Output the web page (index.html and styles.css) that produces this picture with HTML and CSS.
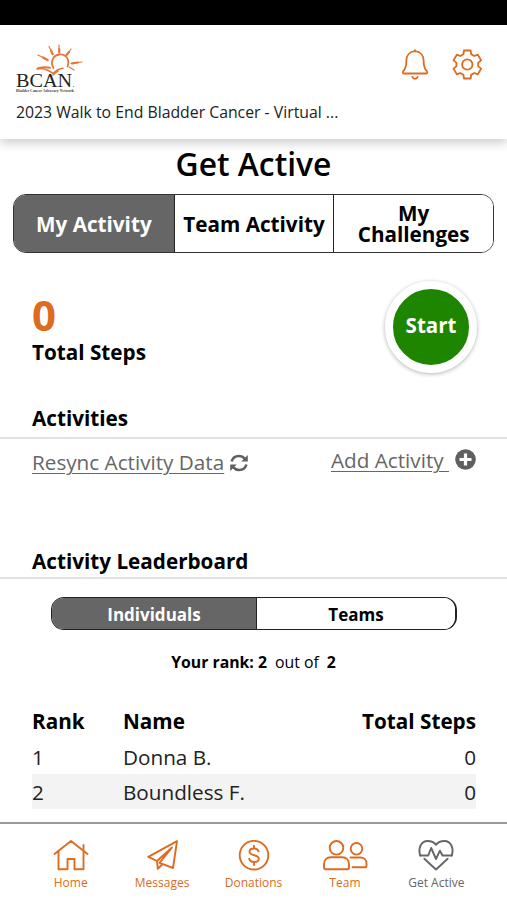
FILE: index.html
```html
<!DOCTYPE html>
<html lang="en">
<head>
    <meta charset="utf-8">
    <meta name="viewport" content="width=device-width, initial-scale=1">
    <title>Get Active</title>
    <link rel="stylesheet" href="styles.css">
</head>
<body>
    <div class="status-bar"></div>

    <header class="header">
        <div class="header-top">
            <svg class="logo" viewBox="0 0 70 52" width="70" height="52">
                <g fill="none" stroke="#e2783c" stroke-linecap="round">
                    <path stroke-width="1.8" d="M37.500 23c-3.500-6-.5-13 6-13.500c7-.5 10.500 5.500 8 12"/>
                    <path stroke-width="1.600" d="M21 24c6-2 10 1 13 2.500l3 2c4-4 7-5 10-5.200M37 30c2-2 3-3 5-4"/>
                    <path stroke-width="2" d="M22 23.300c4-1 8-1.500 12-.500"/>
                    <path stroke-width="1.200" d="M22 10l10 5M33 1.500l4 8M43 0l.3 8M55 4l-5 7M66 17l-11 1.500M58 25l-5-3"/>
                    <path stroke-width="2.200" d="M27 12.500l4.500 2.500M35 5.500l1.500 3.500M43.200 4v3.500M53 7l-2.500 3M62 17.500l-6 .8"/>
                </g>
                <text class="logo-name" x="0" y="41.500" textLength="56" lengthAdjust="spacingAndGlyphs">BCAN</text>
                <text class="logo-dot" x="56.500" y="41.500">.</text>
                <text class="logo-sub" x="0" y="46.500" textLength="58" lengthAdjust="spacingAndGlyphs">Bladder Cancer Advocacy Network</text>
            </svg>
            <div class="header-icons">
                <svg width="28" height="32" viewBox="0 0 28 32">
                    <g fill="none" stroke="#dd6b20" stroke-width="1.800" stroke-linecap="round" stroke-linejoin="round">
                        <path d="M14 2.200c-5.300.4-8.600 4-8.600 9.300c0 5.500-.6 8-3.100 10.500c-1 1.100-.9 2.500.6 2.500h22.200c1.500 0 1.600-1.400.6-2.500c-2.500-2.500-3.100-5-3.100-10.500c0-5.300-3.300-8.900-8.600-9.300z"/>
                        <path d="M14 2.200V1.200M11.300 27.800c.4 1.300 1.400 2 2.700 2s2.300-.7 2.700-2"/>
                    </g>
                </svg>
                <svg width="32" height="32" viewBox="0 0 32 32">
                    <g fill="none" stroke="#dd6b20" stroke-width="1.900" stroke-linejoin="round" transform="translate(16.300 15.500) scale(.96)">
                        <path d="M-4-10.800L-3.500-14.600H3.500L4-10.800L7.350-8.860L10.890-10.330L14.390-4.270L11.350-1.940V1.940L14.390 4.270L10.890 10.330L7.350 8.860L4 10.800L3.500 14.600H-3.500L-4 10.800L-7.350 8.860L-10.890 10.330L-14.390 4.270L-11.350 1.940V-1.940L-14.390-4.270L-10.890-10.330L-7.350-8.860z"/>
                        <circle r="5.400"/>
                    </g>
                </svg>
            </div>
        </div>
        <p class="event-name">2023 Walk to End Bladder Cancer - Virtual ...</p>
    </header>

    <main>
        <h1>Get Active</h1>

        <div class="tabs">
            <button class="tab active">My Activity</button>
            <button class="tab">Team Activity</button>
            <button class="tab">My Challenges</button>
        </div>

        <section class="summary">
            <div>
                <div class="steps">0</div>
                <div class="steps-label">Total Steps</div>
            </div>
            <button class="start">Start</button>
        </section>

        <h2>Activities</h2>
        <div class="links">
            <div class="link-item resync">
                <a href="#">Resync Activity Data</a>
                <svg width="18" height="18" viewBox="0 0 18 18">
                    <g fill="none" stroke="#5f5f5f" stroke-width="2.600">
                        <path d="M1.600 7.500C2.600 4 5.500 2 8.900 2c2.400 0 4.300.9 5.800 2.600M16.400 10.500C15.400 14 12.500 16 9.100 16c-2.400 0-4.300-.9-5.800-2.600"/>
                    </g>
                    <path fill="#5f5f5f" d="M17.800 1v6.500h-6.500zM.2 17v-6.500h6.500z"/>
                </svg>
            </div>
            <div class="link-item add">
                <a href="#">Add Activity&nbsp;</a>
                <svg width="21" height="21" viewBox="0 0 21 21">
                    <circle cx="10.500" cy="10.500" r="10.300" fill="#5f5f5f"/>
                    <path d="M10.500 4.500v12M4.500 10.500h12" stroke="#fff" stroke-width="3.200"/>
                </svg>
            </div>
        </div>

        <h2 class="leaderboard-title">Activity Leaderboard</h2>
        <div class="toggle">
            <button class="toggle-item active">Individuals</button>
            <button class="toggle-item">Teams</button>
        </div>
        <p class="rank"><b>Your rank: 2</b><span>out of</span><b>2</b></p>

        <table>
            <thead>
                <tr><th class="col-rank">Rank</th><th>Name</th><th class="num">Total Steps</th></tr>
            </thead>
            <tbody>
                <tr><td>1</td><td>Donna B.</td><td class="num">0</td></tr>
                <tr class="odd"><td>2</td><td>Boundless F.</td><td class="num">0</td></tr>
            </tbody>
        </table>
    </main>

    <nav class="bottom-nav">
        <a class="nav-item" href="#">
            <svg width="46" height="32" viewBox="0 0 46 32">
                <path d="M6.500 14L23 1l16.500 13M10.500 11.500v17.800h9V19h7v10.300h9V11.500M35.500 10V5"/>
            </svg>
            <span>Home</span>
        </a>
        <a class="nav-item" href="#">
            <svg width="46" height="32" viewBox="0 0 46 32">
                <path d="M38 1.200L9.300 16.800l8.700 4.200L33 7.500L20.500 22.800L34 28zM18 21l.8 7.800l4.700-4.500"/>
            </svg>
            <span>Messages</span>
        </a>
        <a class="nav-item" href="#">
            <svg width="46" height="32" viewBox="0 0 46 32">
                <circle cx="23" cy="15.200" r="14.300"/>
                <path d="M27.500 11.400c-.5-1.800-2.200-2.900-4.500-2.900c-2.700 0-4.500 1.200-4.500 3.300c0 4.600 9.300 2.200 9.300 6.900c0 2.100-1.900 3.300-4.800 3.300c-2.500 0-4.300-1.100-4.800-3.200M23 5.700v2.800M23 22v3"/>
            </svg>
            <span>Donations</span>
        </a>
        <a class="nav-item" href="#">
            <svg width="46" height="32" viewBox="0 0 46 32">
                <circle cx="14.500" cy="7.800" r="6.800"/>
                <path d="M2 27.500v-3c0-4.600 2.800-7.300 6.800-7.300h11.400c4 0 6.800 2.700 6.800 7.300v3c0 1-.6 1.700-1.700 1.700H3.700c-1.100 0-1.700-.7-1.700-1.700z"/>
                <circle cx="34.500" cy="8.800" r="5.800"/>
                <path d="M28.500 17.500h10c3.500 0 6 2.300 6 6v2.200c0 1-.6 1.600-1.600 1.600H30.500"/>
            </svg>
            <span>Team</span>
        </a>
        <a class="nav-item current" href="#">
            <svg width="46" height="32" viewBox="0 0 46 32">
                <path d="M7.200 15.500C4.800 7.500 8.500 1 14.500 1c3.700 0 6.500 1.200 8.500 3.800C25 2.200 27.800 1 31.500 1c6 0 9.700 6.500 7.300 14.500M11.300 18.800L23 29.500L34.700 18.800"/>
                <path d="M7.200 15.500h8L18.200 8l4.800 11l3.900-8.300l2.600 4.800h9.300"/>
            </svg>
            <span>Get Active</span>
        </a>
    </nav>
</body>
</html>
```

FILE: styles.css
```css
* {
    box-sizing: border-box;
}
body {
    margin: 0;
    height: 900px;
    display: flex;
    flex-direction: column;
    overflow: hidden;
    background: #fff;
    color: #000;
    font-family: "Open Sans", sans-serif;
}
button {
    margin: 0;
    padding: 0;
    border: none;
    background: #fff;
    color: #000;
    font-family: inherit;
    font-weight: bold;
}
.status-bar {
    height: 25px;
    background: #000;
}
.header {
    height: 114px;
    padding: 17px 24px 0 16px;
    box-shadow: 0 4px 10px rgba(0, 0, 0, 0.2);
}
.header-top {
    display: flex;
    justify-content: space-between;
    height: 59px;
    padding-top: 3px;
}
.header-icons {
    display: flex;
    gap: 22px;
    padding-top: 4px;
}
.logo {
    overflow: visible;
}
.logo-name {
    font-family: "Liberation Serif", serif;
    font-size: 18px;
    fill: #222;
}
.logo-dot {
    font-family: "Liberation Serif", serif;
    font-size: 8px;
    fill: #222;
}
.logo-sub {
    font-family: "Liberation Serif", serif;
    font-size: 4px;
    font-weight: bold;
    fill: #444;
}
.event-name {
    margin: 0;
    font-size: 15.8px;
    line-height: 23px;
    color: #222;
}
main {
    flex: 1;
}
h1 {
    margin: 0;
    padding-top: 3px;
    font-size: 31.8px;
    font-weight: 600;
    line-height: 44px;
    text-align: center;
}
.tabs {
    display: grid;
    grid-template-columns: repeat(3, minmax(0, 1fr));
    height: 59px;
    margin: 8px 13px 0;
    border: 1px solid #333;
    border-radius: 13px;
    overflow: hidden;
}
.tab {
    padding-top: 2px;
    font-size: 20.7px;
    line-height: 21px;
    white-space: nowrap;
}
.tab:last-child {
    padding: 0 20px;
    white-space: normal;
}
.tab + .tab {
    border-left: 1px solid #222;
}
.tab.active, .toggle-item.active {
    background: #666;
    color: #fff;
}
.summary {
    display: flex;
    justify-content: space-between;
    height: 151px;
    padding: 28px 30px 0 32px;
}
.steps {
    margin-top: 4px;
    font-size: 42px;
    font-weight: bold;
    line-height: 60px;
    color: #dd6b20;
}
.steps-label {
    margin-top: -6px;
    font-size: 20.7px;
    font-weight: bold;
    line-height: 26px;
}
.start {
    width: 92px;
    height: 92px;
    padding-bottom: 4px;
    border: 8px solid #fff;
    border-radius: 50%;
    background: #1e8500;
    box-shadow: 0 1px 4px rgba(0, 0, 0, 0.3);
    color: #fff;
    font-size: 20.5px;
}
h2 {
    height: 35px;
    margin: 0;
    padding-left: 32px;
    border-bottom: 2px solid #e2e2e2;
    font-size: 20.7px;
    line-height: 29px;
}
.leaderboard-title {
    height: 33px;
    line-height: 31px;
}
.links {
    display: flex;
    justify-content: space-between;
    height: 107px;
    padding: 7px 31px 0 32px;
}
.link-item {
    display: flex;
    align-items: flex-start;
}
.link-item a {
    color: #666;
    font-size: 20.7px;
    line-height: 28px;
    text-decoration-thickness: 1px;
    text-underline-offset: 3px;
}
.resync {
    gap: 6px;
    padding-top: 2px;
}
.resync svg {
    margin-top: 6px;
}
.add {
    gap: 6px;
}
.add svg {
    margin-top: 3px;
}
.toggle {
    display: flex;
    height: 33px;
    margin: 18px 50px 0 51px;
    border: 1px solid #222;
    border-right-width: 2px;
    border-radius: 13px;
    overflow: hidden;
}
.toggle-item {
    width: 198px;
    padding-top: 1px;
    font-size: 17px;
}
.toggle-item.active {
    width: 204px;
}
.toggle-item + .toggle-item {
    flex: 1;
    border-left: 1px solid #222;
}
.rank {
    display: flex;
    justify-content: center;
    gap: 8px;
    margin: 21px 0 0;
    font-size: 15.8px;
    line-height: 22px;
}
table {
    width: 444px;
    margin: 31px 0 0 32px;
    border-collapse: collapse;
    font-size: 20.7px;
}
th, td {
    height: 35px;
    padding: 0;
    line-height: 27px;
    text-align: left;
}
td {
    padding-top: 1px;
    color: #222;
}
.col-rank {
    width: 91px;
}
.num {
    text-align: right;
}
.odd {
    background: #f3f3f3;
}
.bottom-nav {
    display: flex;
    height: 78px;
    padding: 16px 25px 0;
    border-top: 2px solid #999;
}
.nav-item {
    display: flex;
    flex: 1;
    flex-direction: column;
    align-items: center;
    color: #dd6b20;
    font-size: 12px;
    line-height: 16px;
    text-decoration: none;
}
.nav-item svg {
    margin-bottom: 3px;
    fill: none;
    stroke: currentColor;
    stroke-width: 1.9;
    stroke-linecap: round;
    stroke-linejoin: round;
}
.nav-item.current {
    color: #666;
}
```
